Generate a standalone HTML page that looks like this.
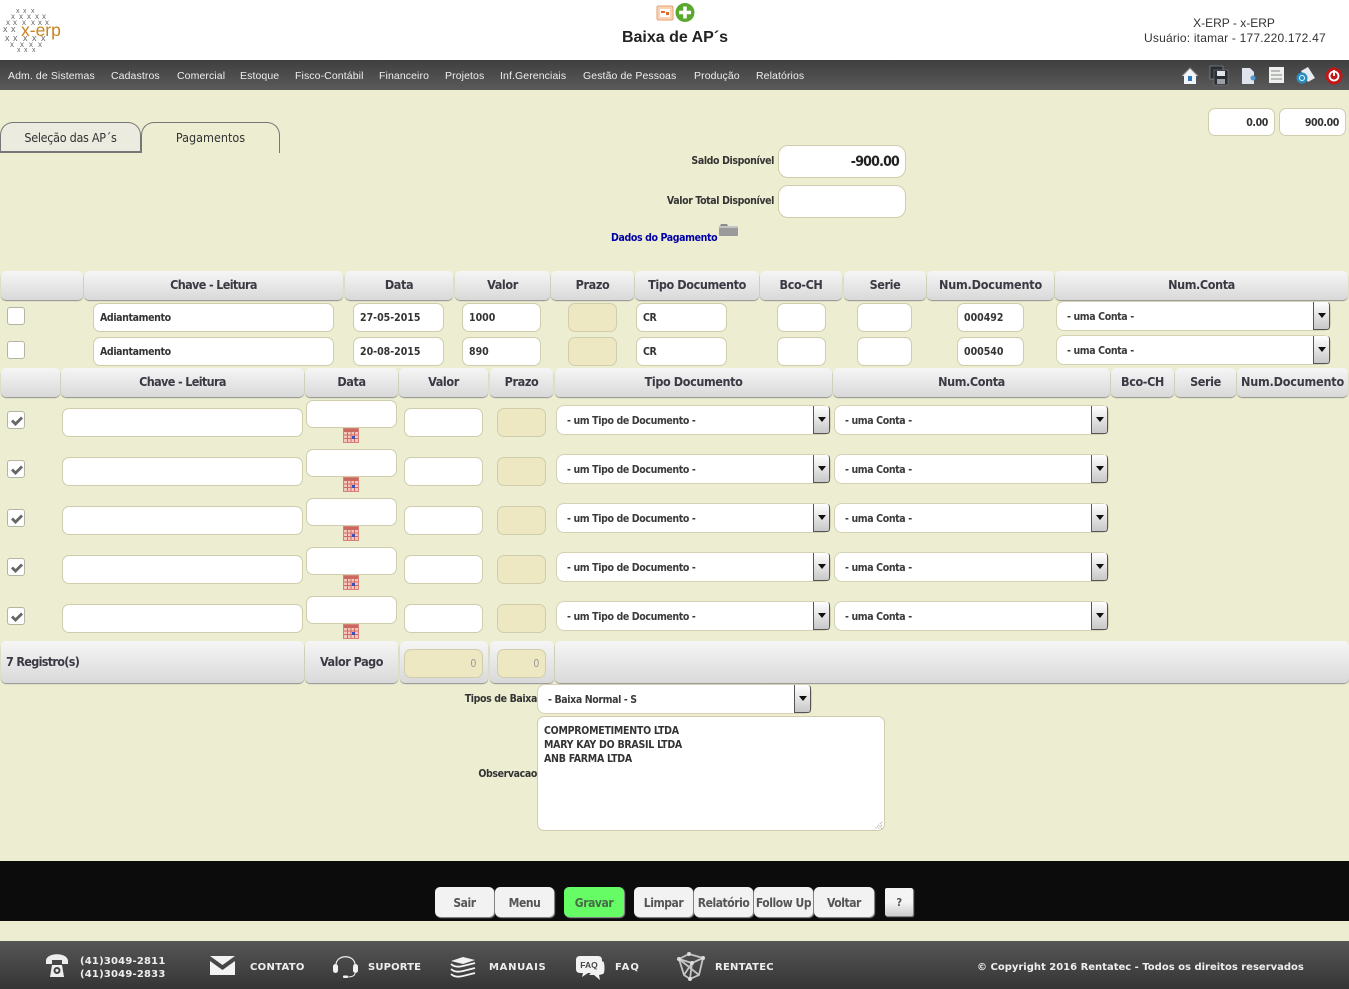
<!DOCTYPE html>
<html lang="pt-BR"><head><meta charset="utf-8"><title>Baixa de AP´s</title>
<style>
*{box-sizing:border-box}
html,body{margin:0;padding:0}
body{width:1349px;height:989px;position:relative;overflow:hidden;background:#edeed1;font-family:"DejaVu Sans Condensed","DejaVu Sans",sans-serif;font-stretch:condensed;color:#333}
#p div,#p span.t,#p svg.a{position:absolute}
.t{white-space:nowrap;line-height:14px}
.hd{left:0;top:0;width:1349px;height:60px;background:#fff}
.nav{left:0;top:60px;width:1349px;height:30px;background:linear-gradient(#3f3f3f,#5a5a5a)}
.n{top:69px;font:10.5px/14px "Liberation Sans",sans-serif;color:#eee;letter-spacing:.1px}
.th{height:29px;background:linear-gradient(#f6f6f6,#d9d9d9);border-radius:5px;box-shadow:0 1px 1px #8f8f8f;text-align:center;font-weight:700;font-size:12.5px;line-height:28px;color:#3a3a44;letter-spacing:-.4px}
.i{height:29px;background:#fff;border:1px solid #cfcdac;border-radius:7px;font-weight:700;font-size:10.5px;line-height:29px;padding-left:6px;color:#333;white-space:nowrap;letter-spacing:-.38px}
.d{letter-spacing:0}
.z{background:#eee8c2}
.r{text-align:right;padding:0 6px 0 0}
.s{height:30px;width:275px;background:#fff;border:1px solid #d4d2b2;border-radius:8px;font-weight:700;font-size:10.5px;line-height:30px;padding-left:10px;color:#3a3a3a;white-space:nowrap;letter-spacing:-.38px}
.s b{position:absolute;right:0;top:0;width:17px;height:28px;background:linear-gradient(#fff,#c8c8c8);border:1px solid #555;border-width:0 1px 1px 1px;border-radius:0 3px 3px 0}
.s b:after{content:"";position:absolute;left:4px;top:11px;border:4px solid transparent;border-top:5px solid #111;border-bottom:0}
.c{left:7px;width:18px;height:18px;background:#fff;border:1px solid #b5b5a5;border-radius:3px}
.c svg{position:absolute;left:2px;top:3px}
.l{font-weight:700;font-size:10.5px;color:#333;letter-spacing:-.38px}
.b{top:887px;width:59px;height:30px;background:#f2f2f2;border-radius:5px;box-shadow:1px 1px 1px #999;text-align:center;font-weight:700;font-size:12px;line-height:33px;color:#555;white-space:nowrap;overflow:hidden;letter-spacing:-.45px}
.f{top:961px;font:700 10px/13px "DejaVu Sans",sans-serif;font-stretch:normal;color:#eee;white-space:nowrap}
.cal{width:16px;height:15px}
</style></head>
<body>
<svg width="0" height="0" style="position:absolute">
<defs>
<symbol id="ck" viewBox="0 0 14 12"><path d="M1 6.500 3 4.500 5.500 7 11 1.500 13 3.500 5.500 11z" fill="#666"/></symbol>
<symbol id="cal" viewBox="0 0 16 15"><rect x=".5" y=".5" width="15" height="14" fill="#f4c8c0" stroke="#d88078"/><rect x="1" y="1" width="14" height="3" fill="#c9695f"/><path d="M1 7h14M1 10.500h14M4.500 4v10M8 4v10M11.500 4v10" stroke="#d06a60" stroke-width="1"/><rect x="9" y="8" width="3" height="3" fill="#3c50b8"/></symbol>
</defs></svg>
<div id="p">
<div class="hd"></div>
<svg class="a" style="left:0;top:0" width="66" height="58" viewBox="0 0 66 58">
<g font-family="Liberation Sans,sans-serif" fill="#666">
<text font-size="7" x="16 23 31" y="13">xxx</text>
<text font-size="8" x="11 19 27 35 42" y="19">xxxxx</text>
<text font-size="8" x="6 13 22 31 38 45" y="25">xxxxxx</text>
<text font-size="9" x="3 11" y="32">xx</text>
<text font-size="9" x="5 13 23 32 41" y="41">xxxxx</text>
<text font-size="8" x="10 20 29 38" y="47">xxxx</text>
<text font-size="7" x="17 24 32" y="52">xxx</text>
</g>
<text x="21" y="36" font-family="Liberation Sans,sans-serif" font-size="17.500" fill="#c8821e">x-erp</text>
</svg>
<svg class="a" style="left:656px;top:3px" width="40" height="20" viewBox="0 0 40 20">
<rect x="1" y="3" width="16" height="14" rx="1.500" fill="#f9d3b6" stroke="#e8a070"/><rect x="4" y="6" width="10" height="8" fill="#fff"/><path d="M5 8h4v2H5zM10 9h3v3h-3z" fill="#e0682c"/>
<circle cx="29" cy="9.500" r="9.500" fill="#5aa82e"/><path d="M29 3.500v12M23 9.500h12" stroke="#fff" stroke-width="3.500"/>
</svg>
<div class="t" style="left:575px;top:27px;width:200px;text-align:center;font:700 16px/18px 'Liberation Sans',sans-serif;color:#222;padding-top:0;margin-top:1px;height:20px"><span style="position:relative;top:1px">Baixa de AP´s</span></div>
<div class="t" style="left:1134px;top:16px;width:200px;text-align:center;font:12px/15px 'Liberation Sans',sans-serif;color:#333">X-ERP - x-ERP</div>
<div class="t" style="left:1144px;top:31px;font:12px/15px 'Liberation Sans',sans-serif;color:#333;letter-spacing:.2px">Usuário: itamar - 177.220.172.47</div>

<div class="nav"></div>
<span class="t n" style="left:8px">Adm. de Sistemas</span>
<span class="t n" style="left:111px">Cadastros</span>
<span class="t n" style="left:177px">Comercial</span>
<span class="t n" style="left:240px">Estoque</span>
<span class="t n" style="left:295px">Fisco-Contábil</span>
<span class="t n" style="left:379px">Financeiro</span>
<span class="t n" style="left:445px">Projetos</span>
<span class="t n" style="left:500px">Inf.Gerenciais</span>
<span class="t n" style="left:583px">Gestão de Pessoas</span>
<span class="t n" style="left:694px">Produção</span>
<span class="t n" style="left:756px">Relatórios</span>
<svg class="a" style="left:1180px;top:65px" width="165" height="21" viewBox="0 0 165 21">
<path d="M2 11 10 3l8 8h-2v8H4v-8z" fill="#f1f4f8"/><path d="M2 11 10 3l8 8" fill="none" stroke="#888" stroke-width="1"/><rect x="8" y="11" width="4" height="5" fill="#2878c0"/>
<rect x="30" y="1" width="13" height="13" fill="#2a2e33" stroke="#9aa" stroke-width=".5"/><rect x="34" y="5" width="14" height="15" fill="#2a2e33" stroke="#889" stroke-width=".5"/><rect x="37" y="6" width="8" height="5" fill="#dfe4e8"/><rect x="37" y="14" width="8" height="5" fill="#9aa0a6"/>
<path d="M62 3h8l4 4v12H62z" fill="#dfe5ea"/><circle cx="73" cy="13" r="2.500" fill="#4e9ad4"/>
<path d="M89 2h15v16H89z" fill="#eef0ee"/><path d="M91 6h9M91 10h11M91 14h11" stroke="#a5a9a5" stroke-width="1.500"/>
<path d="M121 6l7-4 7 11-7 4z" fill="#e8ecf0"/><circle cx="122" cy="13" r="5.500" fill="#2d8dc4"/><circle cx="122" cy="13" r="2.500" fill="none" stroke="#dff" stroke-width="1"/>
<circle cx="154" cy="11" r="8.500" fill="#c01818"/><circle cx="154" cy="11" r="4.500" fill="none" stroke="#fff" stroke-width="1.800"/><path d="M154 5v6" stroke="#fff" stroke-width="2"/>
</svg>

<div style="left:0;top:122px;width:141px;height:31px;background:#ebebdf;border:1px solid #777;border-bottom-width:2px;border-radius:13px 13px 0 0"></div>
<div style="left:141px;top:122px;width:139px;height:31px;border:1px solid #777;border-bottom:0;border-radius:13px 13px 0 0"></div>
<span class="t" style="left:0;top:131px;width:141px;text-align:center;font-size:12.5px;color:#333;letter-spacing:-.3px">Seleção das AP´s</span>
<span class="t" style="left:141px;top:131px;width:139px;text-align:center;font-size:12.5px;color:#333">Pagamentos</span>

<div class="i r" style="left:1208px;top:108px;width:67px;height:28px;line-height:28px">0.00</div>
<div class="i r" style="left:1279px;top:108px;width:67px;height:28px;line-height:28px">900.00</div>
<span class="t l" style="right:575px;top:154px">Saldo Disponível</span>
<div class="i r" style="left:778px;top:145px;width:128px;height:33px;border-radius:10px;font-size:14px;line-height:33px;color:#222;letter-spacing:-.8px">-900.00</div>
<span class="t l" style="right:575px;top:194px">Valor Total Disponível</span>
<div class="i" style="left:778px;top:185px;width:128px;height:33px;border-radius:10px"></div>
<span class="t l" style="left:611px;top:231px;color:#0000a8">Dados do Pagamento</span>
<svg class="a" style="left:718px;top:223px" width="21" height="14" viewBox="0 0 21 14"><path d="M2 3l1-2h6l1 2z" fill="#8c8c8c"/><rect x="1" y="3" width="19" height="10" rx="1" fill="#9a9a9a"/><rect x="1" y="3" width="19" height="2" fill="#c4c4c4"/></svg>

<div class="th" style="left:1px;top:271px;width:82px"></div>
<div class="th" style="left:84px;top:271px;width:259px;letter-spacing:-.65px">Chave - Leitura</div>
<div class="th" style="left:345px;top:271px;width:108px">Data</div>
<div class="th" style="left:455px;top:271px;width:95px">Valor</div>
<div class="th" style="left:551px;top:271px;width:83px">Prazo</div>
<div class="th" style="left:635px;top:271px;width:124px">Tipo Documento</div>
<div class="th" style="left:760px;top:271px;width:82px">Bco-CH</div>
<div class="th" style="left:844px;top:271px;width:82px">Serie</div>
<div class="th" style="left:927px;top:271px;width:127px;letter-spacing:-.2px">Num.Documento</div>
<div class="th" style="left:1055px;top:271px;width:293px">Num.Conta</div>

<div class="c" style="top:307px"></div>
<div class="i" style="left:93px;top:303px;width:241px">Adiantamento</div>
<div class="i d" style="left:353px;top:303px;width:91px">27-05-2015</div>
<div class="i d" style="left:462px;top:303px;width:79px">1000</div>
<div class="i z" style="left:568px;top:303px;width:49px"></div>
<div class="i" style="left:636px;top:303px;width:91px">CR</div>
<div class="i" style="left:777px;top:303px;width:49px"></div>
<div class="i" style="left:857px;top:303px;width:55px"></div>
<div class="i d" style="left:957px;top:303px;width:67px">000492</div>
<div class="s" style="left:1056px;top:301px">- uma Conta -<b></b></div>

<div class="c" style="top:341px"></div>
<div class="i" style="left:93px;top:337px;width:241px">Adiantamento</div>
<div class="i d" style="left:353px;top:337px;width:91px">20-08-2015</div>
<div class="i d" style="left:462px;top:337px;width:79px">890</div>
<div class="i z" style="left:568px;top:337px;width:49px"></div>
<div class="i" style="left:636px;top:337px;width:91px">CR</div>
<div class="i" style="left:777px;top:337px;width:49px"></div>
<div class="i" style="left:857px;top:337px;width:55px"></div>
<div class="i d" style="left:957px;top:337px;width:67px">000540</div>
<div class="s" style="left:1056px;top:335px">- uma Conta -<b></b></div>

<div class="th" style="left:1px;top:368px;width:59px"></div>
<div class="th" style="left:61px;top:368px;width:243px;letter-spacing:-.65px">Chave - Leitura</div>
<div class="th" style="left:305px;top:368px;width:93px">Data</div>
<div class="th" style="left:399px;top:368px;width:89px">Valor</div>
<div class="th" style="left:490px;top:368px;width:63px">Prazo</div>
<div class="th" style="left:555px;top:368px;width:277px">Tipo Documento</div>
<div class="th" style="left:833px;top:368px;width:277px">Num.Conta</div>
<div class="th" style="left:1111px;top:368px;width:63px">Bco-CH</div>
<div class="th" style="left:1175px;top:368px;width:61px">Serie</div>
<div class="th" style="left:1237px;top:368px;width:111px;letter-spacing:-.2px">Num.Documento</div>

<div class="c" style="top:411px"><svg width="14" height="12"><use href="#ck"/></svg></div>
<div class="i" style="left:62px;top:408px;width:241px"></div>
<div class="i" style="left:306px;top:400px;width:91px;height:28px"></div>
<svg class="a cal" style="left:343px;top:428px"><use href="#cal"/></svg>
<div class="i" style="left:404px;top:408px;width:79px"></div>
<div class="i z" style="left:497px;top:408px;width:49px"></div>
<div class="s" style="left:556px;top:405px">- um Tipo de Documento -<b></b></div>
<div class="s" style="left:834px;top:405px">- uma Conta -<b></b></div>

<div class="c" style="top:460px"><svg width="14" height="12"><use href="#ck"/></svg></div>
<div class="i" style="left:62px;top:457px;width:241px"></div>
<div class="i" style="left:306px;top:449px;width:91px;height:28px"></div>
<svg class="a cal" style="left:343px;top:477px"><use href="#cal"/></svg>
<div class="i" style="left:404px;top:457px;width:79px"></div>
<div class="i z" style="left:497px;top:457px;width:49px"></div>
<div class="s" style="left:556px;top:454px">- um Tipo de Documento -<b></b></div>
<div class="s" style="left:834px;top:454px">- uma Conta -<b></b></div>

<div class="c" style="top:509px"><svg width="14" height="12"><use href="#ck"/></svg></div>
<div class="i" style="left:62px;top:506px;width:241px"></div>
<div class="i" style="left:306px;top:498px;width:91px;height:28px"></div>
<svg class="a cal" style="left:343px;top:526px"><use href="#cal"/></svg>
<div class="i" style="left:404px;top:506px;width:79px"></div>
<div class="i z" style="left:497px;top:506px;width:49px"></div>
<div class="s" style="left:556px;top:503px">- um Tipo de Documento -<b></b></div>
<div class="s" style="left:834px;top:503px">- uma Conta -<b></b></div>

<div class="c" style="top:558px"><svg width="14" height="12"><use href="#ck"/></svg></div>
<div class="i" style="left:62px;top:555px;width:241px"></div>
<div class="i" style="left:306px;top:547px;width:91px;height:28px"></div>
<svg class="a cal" style="left:343px;top:575px"><use href="#cal"/></svg>
<div class="i" style="left:404px;top:555px;width:79px"></div>
<div class="i z" style="left:497px;top:555px;width:49px"></div>
<div class="s" style="left:556px;top:552px">- um Tipo de Documento -<b></b></div>
<div class="s" style="left:834px;top:552px">- uma Conta -<b></b></div>

<div class="c" style="top:607px"><svg width="14" height="12"><use href="#ck"/></svg></div>
<div class="i" style="left:62px;top:604px;width:241px"></div>
<div class="i" style="left:306px;top:596px;width:91px;height:28px"></div>
<svg class="a cal" style="left:343px;top:624px"><use href="#cal"/></svg>
<div class="i" style="left:404px;top:604px;width:79px"></div>
<div class="i z" style="left:497px;top:604px;width:49px"></div>
<div class="s" style="left:556px;top:601px">- um Tipo de Documento -<b></b></div>
<div class="s" style="left:834px;top:601px">- uma Conta -<b></b></div>

<div class="th" style="left:1px;top:641px;width:303px;height:42px;line-height:42px;text-align:left;padding-left:5px;letter-spacing:-.7px">7 Registro(s)</div>
<div class="th" style="left:305px;top:641px;width:93px;height:42px;line-height:42px;letter-spacing:-.5px">Valor Pago</div>
<div class="th" style="left:400px;top:641px;width:88px;height:42px"></div>
<div class="th" style="left:490px;top:641px;width:64px;height:42px"></div>
<div class="th" style="left:555px;top:641px;width:794px;height:42px"></div>
<div class="i z r" style="left:404px;top:649px;width:79px;color:#999;font-weight:400">0</div>
<div class="i z r" style="left:497px;top:649px;width:49px;color:#999;font-weight:400">0</div>

<span class="t l" style="right:812px;top:692px">Tipos de Baixa</span>
<div class="s" style="left:537px;top:684px">- Baixa Normal - S<b></b></div>
<span class="t l" style="right:812px;top:767px">Observacao</span>
<div class="i" style="left:537px;top:716px;width:348px;height:115px;line-height:14px;padding-top:7px;white-space:pre;letter-spacing:-.25px">COMPROMETIMENTO LTDA
MARY KAY DO BRASIL LTDA
ANB FARMA LTDA</div>
<svg class="a" style="left:873px;top:820px" width="10" height="10"><path d="M9 2 2 9M9 5 5 9M9 8 8 9" stroke="#999" stroke-dasharray="1 1"/></svg>

<div style="left:0;top:861px;width:1349px;height:60px;background:#0c0c0c"></div>
<div class="b" style="left:435px">Sair</div>
<div class="b" style="left:495px">Menu</div>
<div class="b" style="left:564px;width:60px;background:#66fc66;color:#476b47">Gravar</div>
<div class="b" style="left:634px">Limpar</div>
<div class="b" style="left:694px">Relatório</div>
<div class="b" style="left:754px">Follow Up</div>
<div class="b" style="left:814px;width:60px">Voltar</div>
<div class="b" style="left:885px;top:888px;width:28px;height:28px;border-radius:2px;background:linear-gradient(#f4f4f4 50%,#ccc);font-size:11px;line-height:30px">?</div>

<div style="left:0;top:941px;width:1349px;height:48px;background:linear-gradient(#565656,#353535)"></div>
<svg class="a" style="left:44px;top:950px" width="26" height="30" viewBox="0 0 26 30">
<path d="M2 11c0-9 22-9 22 0v3h-6v-4H8v4H2z" fill="#eee"/><path d="M6 27l2-12h10l2 12z" fill="#eee"/><circle cx="13" cy="20.500" r="3.500" fill="#444"/><circle cx="13" cy="20.500" r="1.500" fill="#eee"/>
</svg>
<svg class="a" style="left:210px;top:955px" width="26" height="21" viewBox="0 0 26 21"><path d="M0 1h25L12.500 10z" fill="#f2f2f2"/><path d="M0 6l12.500 9L25 6v14H0z" fill="#f2f2f2"/></svg>
<svg class="a" style="left:332px;top:953px" width="27" height="26" viewBox="0 0 27 26"><path d="M4 12C4 1 23 1 23 12" fill="none" stroke="#eee" stroke-width="1.200"/><rect x="1" y="11" width="5" height="9" rx="2.500" fill="#f2f2f2"/><rect x="21" y="11" width="5" height="9" rx="2.500" fill="#f2f2f2"/><path d="M23 20c0 3-4 4-8 4" fill="none" stroke="#eee"/><rect x="11" y="22.500" width="5" height="2.500" rx="1" fill="#f2f2f2"/></svg>
<svg class="a" style="left:449px;top:956px" width="28" height="23" viewBox="0 0 28 23"><path d="M2 5 14 1l12 3-12 4z" fill="#f2f2f2"/><path d="M2 8c3 3 8 3 12 2s8-2 12-3M2 13c3 3 8 3 12 2s8-2 12-3M2 18c3 3 8 3 12 2s8-2 12-3" fill="none" stroke="#f2f2f2" stroke-width="1.800"/></svg>
<svg class="a" style="left:575px;top:955px" width="31" height="26" viewBox="0 0 31 26"><path d="M5 1h18c3 0 4 2 4 4v9c0 3-2 4-4 4H13l-6 4 1-4H5c-3 0-4-2-4-4V5c0-2 1-4 4-4z" fill="#f2f2f2"/><path d="M28 6c2 2 2 12 0 13l-4 1 1 5-6-5h-5" fill="#f2f2f2"/><text x="14" y="13" text-anchor="middle" font-family="Liberation Sans,sans-serif" font-size="8.500" font-weight="700" fill="#444">FAQ</text></svg>
<svg class="a" style="left:675px;top:951px" width="30" height="30" viewBox="0 0 30 30"><path d="M4 8 14 3 28 7 17 12zM4 8 9 24 15 28 24 24 28 7M17 12 15 28M4 8 24 24M17 12 9 24" fill="none" stroke="#c4c4c4" stroke-width="1.800"/><circle cx="4" cy="8" r="2" fill="#ddd"/><circle cx="14" cy="3" r="2" fill="#ddd"/><circle cx="28" cy="7" r="2" fill="#ddd"/><circle cx="17" cy="12" r="2" fill="#ddd"/><circle cx="15" cy="28" r="2" fill="#ddd"/></svg>
<div class="t f" style="left:80px;top:955px;letter-spacing:.2px">(41)3049-2811<br>(41)3049-2833</div>
<span class="t f" style="left:250px;letter-spacing:.3px">CONTATO</span>
<span class="t f" style="left:368px;letter-spacing:.15px">SUPORTE</span>
<span class="t f" style="left:489px;letter-spacing:.7px">MANUAIS</span>
<span class="t f" style="left:615px;letter-spacing:1px">FAQ</span>
<span class="t f" style="left:715px;letter-spacing:.25px">RENTATEC</span>
<span class="t f" style="left:977px">© Copyright 2016 Rentatec - Todos os direitos reservados</span>
</div>
</body></html>
